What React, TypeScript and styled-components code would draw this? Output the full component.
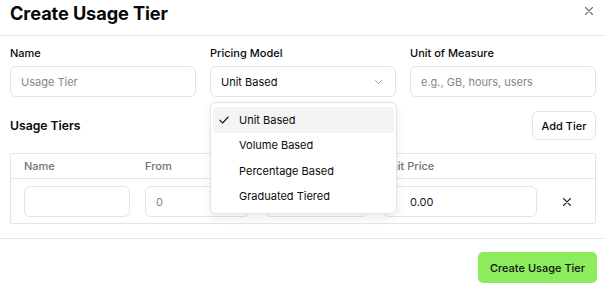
import React from 'react';
import styled, { createGlobalStyle } from 'styled-components';

const GlobalStyle = createGlobalStyle`
  body {
    margin: 0;
    background: #ffffff;
    font-family: Inter, "Liberation Sans", sans-serif;
    color: #09090b;
  }
`;

const Dialog = styled.div`
  width: 604px;
  height: 291px;
  overflow: hidden;
  background: #fff;
`;

const Header = styled.div`
  height: 35px;
  border-bottom: 1px solid #e6e6e8;
  display: flex;
  justify-content: space-between;
  align-items: flex-start;
  padding: 0 10px;
`;

const Title = styled.h2`
  margin: 1px 0 0;
  font-size: 18.2px;
  line-height: 24px;
  font-weight: 700;
  letter-spacing: -0.1px;
`;

const CloseButton = styled.button`
  border: 0;
  background: none;
  padding: 0;
  margin-top: 6px;
  width: 10px;
  height: 10px;
  display: flex;
  align-items: center;
  justify-content: center;
  color: #6b6b70;
`;

const Body = styled.div`
  padding: 9px 8px 0 10px;
`;

const FieldRow = styled.div`
  display: grid;
  grid-template-columns: 186px 186px 186px;
  gap: 14px;
`;

const Field = styled.div`
  position: relative;
  display: flex;
  flex-direction: column;
  gap: 5px;
`;

const Label = styled.label`
  font-size: 11px;
  line-height: 16px;
  font-weight: 500;
`;

const Input = styled.input<{ $pad?: number }>`
  box-sizing: border-box;
  width: 100%;
  height: 31px;
  border: 1px solid #e4e4e7;
  border-radius: 6px;
  padding: 0 10px 0 ${(p) => p.$pad ?? 10}px;
  font-family: inherit;
  font-size: 11px;
  color: #18181b;
  background: #fff;
  outline: none;

  &::placeholder {
    color: #86868c;
  }
`;

const SelectTrigger = styled.div`
  box-sizing: border-box;
  height: 31px;
  border: 1px solid #e4e4e7;
  border-radius: 6px;
  padding: 0 13px 0 10px;
  display: flex;
  align-items: center;
  justify-content: space-between;
  font-size: 11px;
`;

const Menu = styled.div`
  position: absolute;
  top: 57px;
  left: 0;
  width: 187px;
  box-sizing: border-box;
  background: #fff;
  border: 1px solid #e4e4e7;
  border-radius: 6px;
  padding: 4px 2px;
  box-shadow: 0 4px 10px rgba(0, 0, 0, 0.08);
  z-index: 5;
`;

const MenuItem = styled.div<{ $active?: boolean }>`
  display: grid;
  grid-template-columns: 20px 1fr;
  align-items: center;
  height: 25.5px;
  padding-left: 6px;
  border-radius: 4px;
  font-size: 11px;
  background: ${(p) => (p.$active ? '#f4f4f5' : 'transparent')};
`;

const SectionHead = styled.div`
  margin-top: 14px;
  display: flex;
  align-items: center;
  justify-content: space-between;
`;

const SectionTitle = styled.h3`
  margin: 0;
  font-size: 12.2px;
  font-weight: 600;
`;

const OutlineButton = styled.button`
  height: 29px;
  width: 64px;
  padding: 0;
  border: 1px solid #e4e4e7;
  border-radius: 6px;
  background: #fff;
  font-family: inherit;
  font-size: 11px;
  font-weight: 500;
  color: #09090b;
`;

const Table = styled.div`
  margin-top: 13px;
  border: 1px solid #e4e4e7;
  border-radius: 2px;
`;

const Row = styled.div<{ $head?: boolean }>`
  display: grid;
  grid-template-columns: 106px 105px 103px 154px 1fr;
  column-gap: 15px;
  align-items: center;
  padding: ${(p) => (p.$head ? '0 14px 0 13px' : '7px 14px 6px 13px')};
  height: ${(p) => (p.$head ? '24px' : 'auto')};
  border-bottom: ${(p) => (p.$head ? '1px solid #e4e4e7' : '0')};
`;

const Th = styled.div`
  font-size: 11px;
  color: #71717a;
  font-weight: 500;
`;

const RemoveCell = styled.div`
  display: flex;
  justify-content: center;
  color: #27272a;
`;

const Footer = styled.div`
  margin-top: 14px;
  border-top: 1px solid #e6e6e8;
  padding: 13px 7px 0 0;
  display: flex;
  justify-content: flex-end;
`;

const PrimaryButton = styled.button`
  height: 31px;
  width: 119px;
  border: 0;
  border-radius: 5px;
  background: #8cec5e;
  font-family: inherit;
  font-size: 11px;
  font-weight: 500;
  color: #111;
`;

const XIcon = ({ size = 8 }: { size?: number }) => (
  <svg width={size} height={size} viewBox="0 0 8 8" fill="none">
    <path d="M0.5 0.5L7.5 7.5M7.5 0.5L0.5 7.5" stroke="currentColor" strokeWidth="1.1" strokeLinecap="round" />
  </svg>
);

const Chevron = () => (
  <svg width="7" height="4" viewBox="0 0 7 4" fill="none">
    <path d="M0.5 0.5L3.5 3.5L6.5 0.5" stroke="#9a9aa0" strokeWidth="0.9" strokeLinecap="round" strokeLinejoin="round" />
  </svg>
);

const Check = () => (
  <svg width="10" height="8" viewBox="0 0 10 8" fill="none">
    <path d="M0.8 4.2L3.6 7L9.2 1" stroke="#18181b" strokeWidth="1.1" strokeLinecap="round" strokeLinejoin="round" />
  </svg>
);

const pricingModels = ['Unit Based', 'Volume Based', 'Percentage Based', 'Graduated Tiered'];

export default function App() {
  return (
    <Dialog>
      <GlobalStyle />
      <Header>
        <Title>Create Usage Tier</Title>
        <CloseButton>
          <XIcon size={8} />
        </CloseButton>
      </Header>
      <Body>
        <FieldRow>
          <Field>
            <Label>Name</Label>
            <Input placeholder="Usage Tier" />
          </Field>
          <Field>
            <Label>Pricing Model</Label>
            <SelectTrigger>
              <span>Unit Based</span>
              <Chevron />
            </SelectTrigger>
            <Menu>
              {pricingModels.map((m, i) => (
                <MenuItem key={m} $active={i === 0}>
                  <span>{i === 0 && <Check />}</span>
                  <span>{m}</span>
                </MenuItem>
              ))}
            </Menu>
          </Field>
          <Field>
            <Label>Unit of Measure</Label>
            <Input placeholder="e.g., GB, hours, users" />
          </Field>
        </FieldRow>

        <SectionHead>
          <SectionTitle>Usage Tiers</SectionTitle>
          <OutlineButton>Add Tier</OutlineButton>
        </SectionHead>

        <Table>
          <Row $head>
            <Th>Name</Th>
            <Th>From</Th>
            <Th>To</Th>
            <Th>Unit Price</Th>
            <Th />
          </Row>
          <Row>
            <Input />
            <Input placeholder="0" />
            <Input />
            <Input $pad={26} defaultValue="0.00" />
            <RemoveCell>
              <XIcon size={8} />
            </RemoveCell>
          </Row>
        </Table>
      </Body>
      <Footer>
        <PrimaryButton>Create Usage Tier</PrimaryButton>
      </Footer>
    </Dialog>
  );
}
